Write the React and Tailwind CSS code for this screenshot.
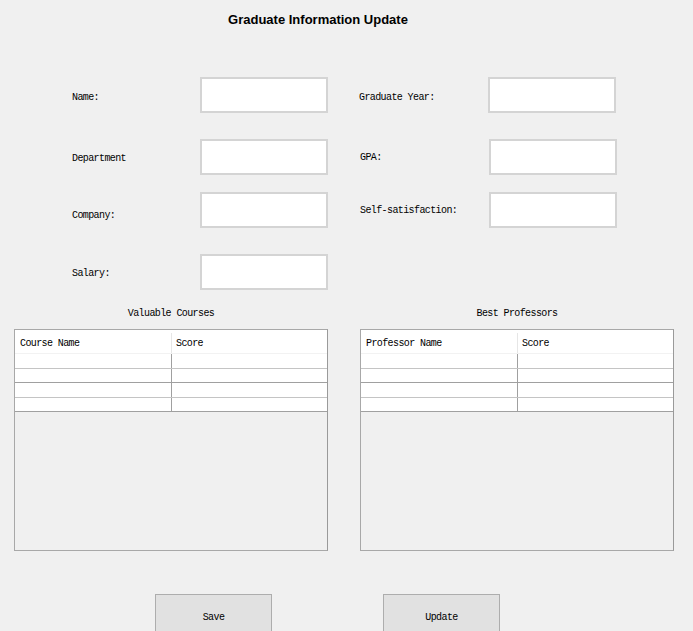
import React from 'react';

const mono = { fontFamily: '"Liberation Mono", "DejaVu Sans Mono", monospace' };

const Field = ({ label, className = '' }) => (
  <>
    <div className={`flex items-center text-[10px] tracking-[-0.6px] text-black ${className}`}>{label}</div>
    <div className="h-[36px] bg-white border-2 border-[#d4d4d4]" />
  </>
);

const Table = ({ title, first }) => {
  const rows = [
    'h-[15px] border-[#c4c4c4]',
    'h-[14px] border-[#a0a0a0]',
    'h-[15px] border-[#c4c4c4]',
    'h-[14px] border-[#a0a0a0]',
  ];
  return (
    <div className="w-[314px] flex flex-col">
      <div className="h-[12px] leading-[12px] text-center text-[10px] tracking-[-0.6px]">{title}</div>
      <div className="mt-[9px] h-[222px] border border-[#a8a8a8] border-r-[#9a9a9a] bg-[#f0f0f0]">
        <div className="flex h-[24px] pt-[3px] bg-white border-b border-[#f2f2f2] text-[10px] tracking-[-0.6px]">
          <div className="w-[157px] border-r border-[#e6e6e6] pl-[5px] flex items-center">{first}</div>
          <div className="flex-1 pl-[4px] flex items-center">Score</div>
        </div>
        {rows.map((r, i) => (
          <div key={i} className={`flex bg-white border-b ${r}`}>
            <div className="w-[157px] border-r border-[#a0a0a0]" />
            <div className="flex-1" />
          </div>
        ))}
      </div>
    </div>
  );
};

export default function App() {
  return (
    <div className="w-[693px] h-[631px] overflow-hidden bg-[#f0f0f0] text-black" style={mono}>
      {/* Title */}
      <div className="w-[636px] pt-[12px] text-center text-[13px] leading-[16px] font-bold" style={{ fontFamily: '"Liberation Sans", Arial, sans-serif' }}>
        Graduate Information Update
      </div>

      {/* Form */}
      <div className="mt-[49px] grid grid-cols-[200px_128px_31px_129px_128px]">
        <Field label="Name:" className="pl-[72px] pt-[4px]" />
        <div />
        <Field label="Graduate Year:" className="pt-[4px]" />
      </div>
      <div className="mt-[26px] grid grid-cols-[200px_128px_32px_129px_128px]">
        <Field label="Department" className="pl-[72px] pt-[3px]" />
        <div />
        <Field label="GPA:" className="pt-[1px]" />
      </div>
      <div className="mt-[17px] grid grid-cols-[200px_128px_32px_129px_128px]">
        <Field label="Company:" className="pl-[72px] pt-[10px]" />
        <div />
        <Field label="Self-satisfaction:" className="pt-[1px]" />
      </div>
      <div className="mt-[26px] grid grid-cols-[200px_128px]">
        <Field label="Salary:" className="pl-[72px] pt-[2px]" />
      </div>

      {/* Tables */}
      <div className="mt-[18px] flex pl-[14px] gap-[32px]">
        <Table title="Valuable Courses" first="Course Name" />
        <Table title="Best Professors" first="Professor Name" />
      </div>

      {/* Buttons */}
      <div className="mt-[43px] flex pl-[155px] gap-[111px]">
        <button className="w-[117px] h-[44px] pt-[2px] bg-[#e1e1e1] border border-[#adadad] text-[10px] tracking-[-0.6px]">Save</button>
        <button className="w-[117px] h-[44px] pt-[2px] bg-[#e1e1e1] border border-[#adadad] text-[10px] tracking-[-0.6px]">Update</button>
      </div>
    </div>
  );
}
